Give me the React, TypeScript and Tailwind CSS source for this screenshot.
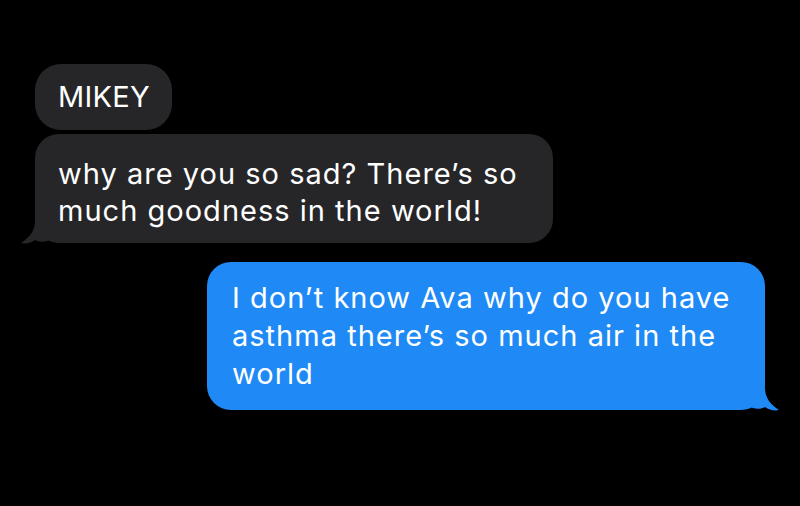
import React from 'react';

const font = { fontFamily: '"Inter", "Liberation Sans", sans-serif' };

function TailLeft() {
    return (
        <svg
            className="absolute left-[-14px] bottom-[-2px]"
            width="30"
            height="24"
            viewBox="0 0 30 24"
        >
            <path d="M14 0 L30 0 L30 18 C24 22 18 21 14 19 C10 22 5 23 0 22 C8 17 14 10 14 0 Z" fill="#262628" />
        </svg>
    );
}

function TailRight() {
    return (
        <svg
            className="absolute right-[-14px] bottom-[-2px]"
            width="30"
            height="24"
            viewBox="0 0 30 24"
        >
            <path d="M16 0 L0 0 L0 18 C6 22 12 21 16 19 C20 22 25 23 30 22 C22 17 16 10 16 0 Z" fill="#1f8af5" />
        </svg>
    );
}

export default function App() {
    return (
        <div className="w-[800px] h-[506px] bg-black overflow-hidden" style={font}>
            <div className="flex flex-col pt-[64px]">
                {/* Sender name */}
                <div className="ml-[35px] w-[137px] h-[66px] rounded-[26px] bg-[#262628] pl-[23px] flex items-center">
                    <span className="text-white text-[29px] tracking-[0.01em] leading-[36px]">MIKEY</span>
                </div>

                {/* Incoming */}
                <div className="relative ml-[35px] mt-[4px] w-[518px] h-[109px] rounded-[24px] bg-[#262628] pl-[23px] pt-[6px] flex items-center">
                    <p className="text-white text-[29px] leading-[37px] tracking-[0.035em]">
                        why are you so sad? There’s so
                        <br />
                        much goodness in the world!
                    </p>
                    <TailLeft />
                </div>

                {/* Outgoing */}
                <div className="relative ml-[207px] mt-[19px] w-[558px] h-[148px] rounded-[24px] bg-[#1f8af5] pl-[25px] flex items-center">
                    <p className="text-white text-[29px] leading-[38px] tracking-[0.035em]">
                        I don’t know Ava why do you have
                        <br />
                        asthma there’s so much air in the
                        <br />
                        world
                    </p>
                    <TailRight />
                </div>
            </div>
        </div>
    );
}
